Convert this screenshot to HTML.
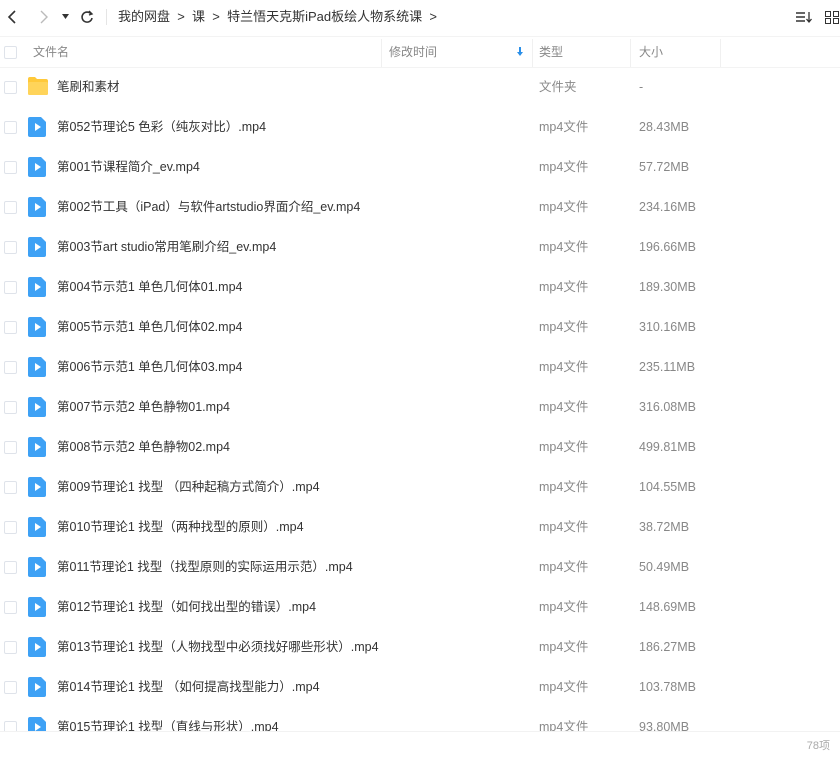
<!DOCTYPE html>
<html><head><meta charset="utf-8"><style>
*{margin:0;padding:0;box-sizing:border-box}
body{width:840px;height:757px;overflow:hidden;background:#fff;font-family:"Liberation Sans","Noto Sans CJK SC",sans-serif;font-size:12.5px;color:#424e67;position:relative}
.top{position:absolute;top:0;left:0;width:840px;height:34px}
.bc{position:absolute;top:0;left:118px;font-size:13px;color:#333;line-height:34px}
.hdr{position:absolute;top:36px;left:0;width:840px;height:32px;border-top:1px solid #f3f3f3;border-bottom:1px solid #f3f3f3}
.hdr span{position:absolute;top:0;line-height:30px;color:#888;font-size:12px}
.div{position:absolute;top:2px;width:1px;height:28px;background:#f0f0f0}
.cb{position:absolute;width:13px;height:13px;border:1px solid #dfe3ea;border-radius:2px;left:4px}
.row{position:absolute;left:0;width:840px;height:40px}
.row .cb{top:14px}
.row .ic{position:absolute;left:28px;top:10px}
.row span{position:absolute;top:0;line-height:40px}
.row .n{left:57px;color:#333}
.row .t{left:539px;color:#888}
.row .s{left:639px;color:#888}
.foot{position:absolute;top:731px;left:0;width:840px;height:26px;background:#fff;border-top:1px solid #f2f2f2}
.foot span{position:absolute;right:10px;top:0;line-height:28px;color:#aaa;font-size:11px}
</style></head><body>
<div class="top">
<svg style="position:absolute;left:6px;top:10px" width="12" height="14"><path d="M9 1 L3 7 L9 13" stroke="#333" stroke-width="1.6" fill="none"/></svg>
<svg style="position:absolute;left:38px;top:10px" width="12" height="14"><path d="M3 1 L9 7 L3 13" stroke="#bbb" stroke-width="1.4" fill="none"/></svg>
<svg style="position:absolute;left:62px;top:14px" width="8" height="6"><path d="M0 0 L7 0 L3.5 5Z" fill="#333"/></svg>
<svg style="position:absolute;left:80px;top:10px" width="14" height="14"><path d="M11 4 A5 5 0 1 0 12 8" stroke="#333" stroke-width="1.6" fill="none"/><path d="M9 1 L12 4 L9 5" stroke="#333" stroke-width="1.4" fill="none"/></svg>
<div style="position:absolute;left:106px;top:9px;width:1px;height:16px;background:#e5e5e5"></div>
<div class="bc">我的网盘 &nbsp;&gt;&nbsp; 课 &nbsp;&gt;&nbsp; 特兰悟天克斯iPad板绘人物系统课 &nbsp;&gt;</div>
<svg style="position:absolute;left:796px;top:11px" width="16" height="13"><path d="M0 2H9M0 6H9M0 10H9" stroke="#333" stroke-width="1.4"/><path d="M13 1V10M10.5 8L13 11L15.5 8" stroke="#333" stroke-width="1.3" fill="none"/></svg>
<svg style="position:absolute;left:825px;top:11px" width="15" height="13"><rect x="0.5" y="0.5" width="5" height="5" stroke="#333" fill="none"/><rect x="8.5" y="0.5" width="5" height="5" stroke="#333" fill="none"/><rect x="0.5" y="7.5" width="5" height="5" stroke="#333" fill="none"/><rect x="8.5" y="7.5" width="5" height="5" stroke="#333" fill="none"/></svg>
</div>
<div class="hdr">
<div class="cb" style="top:9px"></div>
<span style="left:33px">文件名</span>
<div class="div" style="left:381px"></div>
<span style="left:389px">修改时间</span>
<svg style="position:absolute;left:517px;top:10px" width="6" height="10"><path d="M3 0V7" stroke="#2b8fe8" stroke-width="2"/><path d="M0 5L3 9L6 5Z" fill="#2b8fe8"/></svg>
<div class="div" style="left:532px"></div>
<span style="left:539px">类型</span>
<div class="div" style="left:630px"></div>
<span style="left:639px">大小</span>
<div class="div" style="left:720px"></div>
</div>
<div id="rows"></div>
<div class="row" style="top:67px"><div class="cb"></div><svg class="ic" width="20" height="18"><path d="M0 2Q0 0 2 0H7L9 2H18Q20 2 20 4V16Q20 18 18 18H2Q0 18 0 16Z" fill="#ffc93a"/><rect x="0" y="5" width="20" height="13" rx="1.5" fill="#ffd45a"/></svg><span class="n">笔刷和素材</span><span class="t">文件夹</span><span class="s">-</span></div>
<script>
var d=[["第052节理论5 色彩（纯灰对比）.mp4","28.43MB"],["第001节课程简介_ev.mp4","57.72MB"],["第002节工具（iPad）与软件artstudio界面介绍_ev.mp4","234.16MB"],["第003节art studio常用笔刷介绍_ev.mp4","196.66MB"],["第004节示范1 单色几何体01.mp4","189.30MB"],["第005节示范1 单色几何体02.mp4","310.16MB"],["第006节示范1 单色几何体03.mp4","235.11MB"],["第007节示范2 单色静物01.mp4","316.08MB"],["第008节示范2 单色静物02.mp4","499.81MB"],["第009节理论1 找型 （四种起稿方式简介）.mp4","104.55MB"],["第010节理论1 找型（两种找型的原则）.mp4","38.72MB"],["第011节理论1 找型（找型原则的实际运用示范）.mp4","50.49MB"],["第012节理论1 找型（如何找出型的错误）.mp4","148.69MB"],["第013节理论1 找型（人物找型中必须找好哪些形状）.mp4","186.27MB"],["第014节理论1 找型 （如何提高找型能力）.mp4","103.78MB"],["第015节理论1 找型（直线与形状）.mp4","93.80MB"]];
var h="";d.forEach(function(r,i){h+='<div class="row" style="top:'+(107+i*40)+'px"><div class="cb"></div><svg class="ic" width="18" height="20"><path d="M2 0H13L18 5V18Q18 20 16 20H2Q0 20 0 18V2Q0 0 2 0Z" fill="#3ea1f5"/><path d="M7 6L13 10L7 14Z" fill="#fff"/></svg><span class="n">'+r[0]+'</span><span class="t">mp4文件</span><span class="s">'+r[1]+'</span></div>';});
document.getElementById("rows").innerHTML=h;
</script>
<div class="foot"><span>78项</span></div>
</body></html>
